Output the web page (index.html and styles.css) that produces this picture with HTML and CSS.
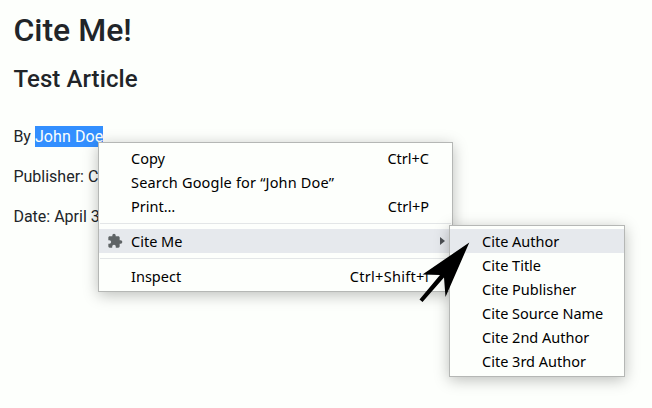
FILE: index.html
```
<!DOCTYPE html>
<html lang="en">
<head>
<meta charset="utf-8">
<title>Cite Me!</title>
<link rel="stylesheet" href="styles.css">
</head>
<body>
<main class="article">
  <h1>Cite Me!</h1>
  <h2>Test Article</h2>
  <p>By <span class="selected">John Doe</span></p>
  <p>Publisher: C</p>
  <p>Date: April 3</p>
</main>
<div class="menu context">
  <div class="item"><span>Copy</span><span>Ctrl+C</span></div>
  <div class="item"><span class="search">Search Google for “John Doe”</span></div>
  <div class="item"><span>Print…</span><span>Ctrl+P</span></div>
  <hr>
  <div class="item active">
    <svg class="puzzle" viewBox="0 0 24 24"><path d="M20.5 11H19V7c0-1.1-.9-2-2-2h-4V3.500a2.500 2.500 0 0 0-5 0V5H4c-1.100 0-2 .900-2 2v3.800h1.500a2.700 2.700 0 0 1 0 5.400H2V20c0 1.100.900 2 2 2h3.800v-1.500a2.700 2.700 0 0 1 5.400 0V22H17c1.100 0 2-.900 2-2v-4h1.500a2.500 2.500 0 0 0 0-5z"/></svg>
    <span>Cite Me</span>
    <svg class="chevron" viewBox="0 0 5 8"><path d="M0 0L5 4L0 8z"/></svg>
  </div>
  <hr>
  <div class="item"><span>Inspect</span><span class="inspect-key">Ctrl+Shift+<span class="plain">I</span></span></div>
</div>
<div class="menu submenu">
  <div class="item active"><span>Cite Author</span></div>
  <div class="item"><span>Cite Title</span></div>
  <div class="item"><span>Cite Publisher</span></div>
  <div class="item"><span>Cite Source Name</span></div>
  <div class="item"><span>Cite 2nd Author</span></div>
  <div class="item"><span>Cite 3rd Author</span></div>
</div>
<svg class="pointer" viewBox="0 0 54 64"><path d="M51.300 2.500L4.500 34.500L22 35L1.500 59.500L4.500 62L26 37.500L27.500 57z"/></svg>
</body>
</html>
```
FILE: styles.css
```
* { box-sizing: border-box; }
body {
  margin: 0;
  height: 408px;
  overflow: hidden;
  position: relative;
  background: #fdfffc;
  color: #212529;
  font: 16px/24px Roboto, sans-serif;
}
.article { padding: 11px 13.400px; }
h1, h2 { margin: 0; font-weight: 500; }
h1 { font-size: 32px; line-height: 38px; }
h2 { margin: 16px 0 31px; font-size: 24px; line-height: 29px; letter-spacing: .08px; }
p { margin: 0 0 16px; line-height: 24px; }
.selected { display: inline-block; height: 21px; line-height: 21px; background: #338fff; color: #fdfffc; letter-spacing: .08px; }
.menu {
  position: absolute;
  padding: 3px 0;
  border: 1px solid #b5b7b5;
  background: #fdfffc;
  color: #000;
  font: 14.500px/24px "Noto Sans", sans-serif;
  box-shadow: 0 3px 14px rgba(0, 0, 0, .26);
}
.context { left: 98px; top: 142px; width: 355px; height: 150px; }
.submenu { left: 449px; top: 225px; width: 176px; height: 152px; }
.item {
  position: relative;
  display: flex;
  justify-content: space-between;
  height: 24px;
  padding: 0 23px 0 32px;
  white-space: nowrap;
}
.search { letter-spacing: .18px; }
.inspect-key { letter-spacing: .3px; }
.plain { font-family: "Open Sans", sans-serif; line-height: 1; }
.active { background: #e6e9ed; }
.menu hr { height: 1px; margin: 5px 1px; border: 0; background: #e3e6e7; }
.puzzle { position: absolute; left: 8px; top: 4px; width: 16px; height: 16px; fill: #5f6466; }
.chevron { position: absolute; right: 7px; top: 8px; width: 5px; height: 8px; fill: #4c5054; }
.pointer { position: absolute; left: 418px; top: 240px; width: 54px; height: 64px; fill: #000; }
```
